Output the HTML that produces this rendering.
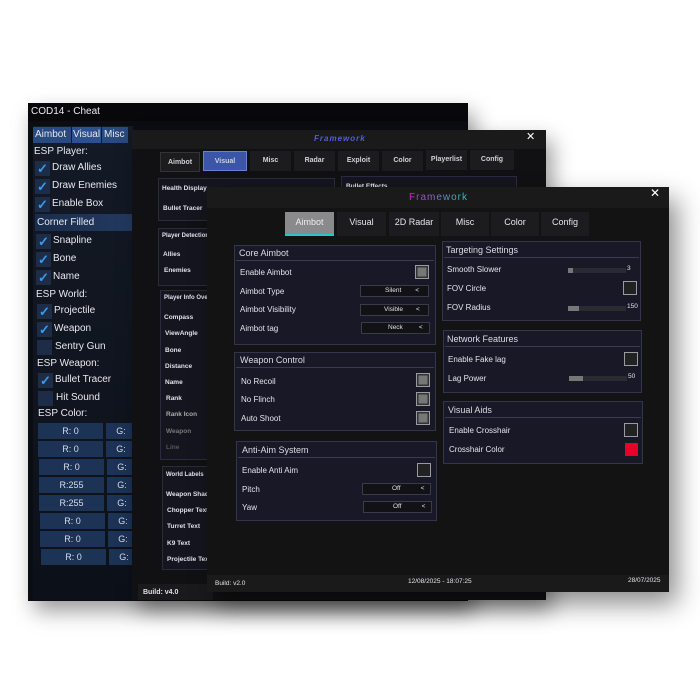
<!DOCTYPE html>
<html><head><style>
*{margin:0;padding:0;box-sizing:border-box}
body{width:700px;height:700px;background:#fff;position:relative;overflow:hidden;font-family:"Liberation Sans",sans-serif;color:#e6e6ee}
.a{position:absolute;white-space:nowrap}
.w1{left:28px;top:103px;width:440px;height:498px;background:#0b0d12;box-shadow:6px 10px 20px rgba(0,0,0,.4)}
.w2{left:132px;top:130px;width:414px;height:470px;background:#111113;box-shadow:6px 10px 20px rgba(0,0,0,.4)}
.w3{left:207px;top:187px;width:462px;height:405px;background:#131313;box-shadow:8px 12px 24px rgba(0,0,0,.45)}
.t1{font-size:10px;color:#e8e8f0}
.cb{width:15px;height:15px;background:#1d2d48}
.ck{color:#3a9af0;font-size:13px;font-weight:bold;line-height:15px;text-align:center}
.cr{height:16px;background:#1c3356;font-size:9px;color:#d8dce8;text-align:center;line-height:16px}
.tab2{height:20px;background:#1c1c1e;font-size:7px;color:#d0d0d8;text-align:center;line-height:20px;font-weight:bold}
.p2{background:#15151f;border:1px solid #2a2a40}
.l2{font-size:6.5px;font-weight:bold;color:#e0e0e8}
.tab3{top:212px;height:24px;background:#1c1c1e;font-size:9px;color:#e4e4ec;text-align:center;line-height:20px}
.p3{background:#181826;border:1px solid #34344c}
.h3{font-size:9px;color:#dcdce6}
.l3{font-size:8px;color:#e4e4ec}
.chk{width:14px;height:14px;border:1.5px solid #9a9aa2;background:#222}
.chk.f{background:#777;box-shadow:inset 0 0 0 1.5px #333}
.dd{width:69px;height:12px;background:#111116;border:1px solid #3a3a48;font-size:6.5px;color:#e0e0e8;line-height:10px}
.sl{width:58px;height:5px;background:#2a2a32}
.sl i{display:block;height:5px;background:#777}
</style></head><body>

<div class="a w1"></div>
<div class="a" style="left:28px;top:103px;width:440px;height:18px;background:#08080a"></div>
<div class="a t1" style="left:31px;top:106px">COD14 - Cheat</div>
<div class="a" style="left:33px;top:126px;width:100px;height:474px;background:linear-gradient(#141a26,#0c1018)"></div>
<div class="a" style="left:33px;top:127px;width:38px;height:16px;background:#284a80;font-size:10px;line-height:16px;padding-left:2px">Aimbot</div>
<div class="a" style="left:72px;top:127px;width:29px;height:16px;background:#2c5090;font-size:10px;line-height:16px;padding-left:1px">Visual</div>
<div class="a" style="left:102px;top:127px;width:26px;height:16px;background:#284a80;font-size:10px;line-height:16px;padding-left:2px">Misc</div>
<div class="a t1" style="left:34px;top:146px">ESP Player:</div>
<div class="a cb ck" style="left:35px;top:161px">✓</div><div class="a t1" style="left:52px;top:162px">Draw Allies</div>
<div class="a cb ck" style="left:35px;top:179px">✓</div><div class="a t1" style="left:52px;top:180px">Draw Enemies</div>
<div class="a cb ck" style="left:35px;top:197px">✓</div><div class="a t1" style="left:52px;top:198px">Enable Box</div>
<div class="a" style="left:35px;top:214px;width:98px;height:17px;background:linear-gradient(90deg,#1a2c4c,#233a60)"></div><div class="a t1" style="left:37px;top:217px">Corner Filled</div>
<div class="a cb ck" style="left:36px;top:234px">✓</div><div class="a t1" style="left:53px;top:235px">Snapline</div>
<div class="a cb ck" style="left:36px;top:252px">✓</div><div class="a t1" style="left:53px;top:253px">Bone</div>
<div class="a cb ck" style="left:36px;top:270px">✓</div><div class="a t1" style="left:53px;top:271px">Name</div>
<div class="a t1" style="left:36px;top:289px">ESP World:</div>
<div class="a cb ck" style="left:37px;top:304px">✓</div><div class="a t1" style="left:54px;top:305px">Projectile</div>
<div class="a cb ck" style="left:37px;top:322px">✓</div><div class="a t1" style="left:54px;top:323px">Weapon</div>
<div class="a cb" style="left:37px;top:340px"></div><div class="a t1" style="left:55px;top:341px">Sentry Gun</div>
<div class="a t1" style="left:37px;top:358px">ESP Weapon:</div>
<div class="a cb ck" style="left:38px;top:373px">✓</div><div class="a t1" style="left:55px;top:374px">Bullet Tracer</div>
<div class="a cb" style="left:38px;top:391px"></div><div class="a t1" style="left:56px;top:392px">Hit Sound</div>
<div class="a t1" style="left:38px;top:408px">ESP Color:</div>
<div class="a cr" style="left:38px;top:423px;width:65px">R: 0</div><div class="a cr" style="left:106px;top:423px;width:30px">G:</div>
<div class="a cr" style="left:38px;top:441px;width:65px">R: 0</div><div class="a cr" style="left:106px;top:441px;width:30px">G:</div>
<div class="a cr" style="left:39px;top:459px;width:65px">R: 0</div><div class="a cr" style="left:107px;top:459px;width:30px">G:</div>
<div class="a cr" style="left:39px;top:477px;width:65px">R:255</div><div class="a cr" style="left:107px;top:477px;width:30px">G:</div>
<div class="a cr" style="left:39px;top:495px;width:65px">R:255</div><div class="a cr" style="left:107px;top:495px;width:30px">G:</div>
<div class="a cr" style="left:40px;top:513px;width:65px">R: 0</div><div class="a cr" style="left:108px;top:513px;width:30px">G:</div>
<div class="a cr" style="left:40px;top:531px;width:65px">R: 0</div><div class="a cr" style="left:108px;top:531px;width:30px">G:</div>
<div class="a cr" style="left:41px;top:549px;width:65px">R: 0</div><div class="a cr" style="left:109px;top:549px;width:30px">G:</div>

<div class="a w2"></div>
<div class="a" style="left:132px;top:130px;width:414px;height:19px;background:#1a1a1a"></div>
<div class="a" style="left:314px;top:134px;font-size:8px;font-style:italic;font-weight:bold;color:#4e5ee0;letter-spacing:1px">Framework</div>
<div class="a" style="left:526px;top:130px;font-size:11px;color:#fff">✕</div>
<div class="a tab2" style="left:160px;top:152px;width:40px;border:1px solid #333">Aimbot</div>
<div class="a tab2" style="left:203px;top:151px;width:44px;background:#3b56a8;border:1px solid #6a80d0">Visual</div>
<div class="a tab2" style="left:250px;top:151px;width:41px">Misc</div>
<div class="a tab2" style="left:294px;top:151px;width:41px">Radar</div>
<div class="a tab2" style="left:338px;top:151px;width:41px">Exploit</div>
<div class="a tab2" style="left:382px;top:151px;width:41px">Color</div>
<div class="a tab2" style="left:426px;top:150px;width:41px">Playerlist</div>
<div class="a tab2" style="left:470px;top:150px;width:44px">Config</div>
<div class="a p2" style="left:158px;top:178px;width:177px;height:43px"></div>
<div class="a l2" style="left:162px;top:185px">Health Display</div>
<div class="a l2" style="left:163px;top:205px">Bullet Tracer</div>
<div class="a p2" style="left:341px;top:176px;width:176px;height:20px"></div>
<div class="a l2" style="left:346px;top:183px">Bullet Effects</div>
<div class="a p2" style="left:158px;top:228px;width:52px;height:58px"></div>
<div class="a l2" style="left:162px;top:233px;font-size:6px">Player Detection</div>
<div class="a l2" style="left:163px;top:251px">Allies</div>
<div class="a l2" style="left:164px;top:267px">Enemies</div>
<div class="a p2" style="left:160px;top:290px;width:50px;height:170px"></div>
<div class="a l2" style="left:164px;top:295px;font-size:6px">Player Info Overl</div>
<div class="a l2" style="left:164px;top:314px">Compass</div>
<div class="a l2" style="left:165px;top:330px">ViewAngle</div>
<div class="a l2" style="left:165px;top:347px">Bone</div>
<div class="a l2" style="left:165px;top:363px">Distance</div>
<div class="a l2" style="left:165px;top:379px">Name</div>
<div class="a l2" style="left:166px;top:395px">Rank</div>
<div class="a l2" style="left:166px;top:411px;color:#aaa">Rank Icon</div>
<div class="a l2" style="left:166px;top:428px;color:#777">Weapon</div>
<div class="a l2" style="left:166px;top:444px;color:#555">Line</div>
<div class="a p2" style="left:162px;top:466px;width:48px;height:104px"></div>
<div class="a l2" style="left:166px;top:472px;font-size:6px">World Labels</div>
<div class="a l2" style="left:166px;top:491px">Weapon Shader</div>
<div class="a l2" style="left:167px;top:507px">Chopper Text</div>
<div class="a l2" style="left:167px;top:523px">Turret Text</div>
<div class="a l2" style="left:167px;top:540px">K9 Text</div>
<div class="a l2" style="left:167px;top:556px">Projectile Text</div>
<div class="a" style="left:138px;top:584px;width:75px;height:16px;background:#1a1a1c"></div>
<div class="a l2" style="left:143px;top:589px;font-size:7px">Build: v4.0</div>

<div class="a w3"></div>
<div class="a" style="left:207px;top:187px;width:462px;height:21px;background:#1a1a1a"></div>
<div class="a" style="left:409px;top:192px;font-size:10px;letter-spacing:1px;background:linear-gradient(90deg,#d020d0,#20d0c0);-webkit-background-clip:text;color:transparent">Framework</div>
<div class="a" style="left:650px;top:186px;font-size:12px;color:#fff">✕</div>
<div class="a tab3" style="left:285px;width:49px;background:#8a8a8c;color:#eee;border-bottom:2px solid #20c8c8">Aimbot</div>
<div class="a tab3" style="left:337px;width:49px">Visual</div>
<div class="a tab3" style="left:389px;width:50px">2D Radar</div>
<div class="a tab3" style="left:441px;width:48px">Misc</div>
<div class="a tab3" style="left:491px;width:48px">Color</div>
<div class="a tab3" style="left:541px;width:48px">Config</div>

<div class="a p3" style="left:234px;top:245px;width:202px;height:100px"></div>
<div class="a" style="left:236px;top:260px;width:198px;height:1px;background:#3a3a50"></div>
<div class="a h3" style="left:239px;top:248px">Core Aimbot</div>
<div class="a l3" style="left:240px;top:268px">Enable Aimbot</div><div class="a chk f" style="left:415px;top:265px"></div>
<div class="a l3" style="left:240px;top:287px">Aimbot Type</div><div class="a dd" style="left:360px;top:285px"><span style="margin-left:24px">Silent</span><span style="margin-left:14px">&lt;</span></div>
<div class="a l3" style="left:240px;top:305px">Aimbot Visibility</div><div class="a dd" style="left:360px;top:304px"><span style="margin-left:23px">Visible</span><span style="margin-left:13px">&lt;</span></div>
<div class="a l3" style="left:240px;top:324px">Aimbot tag</div><div class="a dd" style="left:361px;top:322px"><span style="margin-left:26px">Neck</span><span style="margin-left:16px">&lt;</span></div>

<div class="a p3" style="left:234px;top:352px;width:202px;height:79px"></div>
<div class="a" style="left:236px;top:367px;width:198px;height:1px;background:#3a3a50"></div>
<div class="a h3" style="left:240px;top:355px">Weapon Control</div>
<div class="a l3" style="left:241px;top:377px">No Recoil</div><div class="a chk f" style="left:416px;top:373px"></div>
<div class="a l3" style="left:241px;top:395px">No Flinch</div><div class="a chk f" style="left:416px;top:392px"></div>
<div class="a l3" style="left:241px;top:414px">Auto Shoot</div><div class="a chk f" style="left:416px;top:411px"></div>

<div class="a p3" style="left:236px;top:441px;width:201px;height:80px"></div>
<div class="a" style="left:238px;top:457px;width:197px;height:1px;background:#3a3a50"></div>
<div class="a h3" style="left:242px;top:445px">Anti-Aim System</div>
<div class="a l3" style="left:242px;top:466px">Enable Anti Aim</div><div class="a chk" style="left:417px;top:463px"></div>
<div class="a l3" style="left:242px;top:485px">Pitch</div><div class="a dd" style="left:362px;top:483px"><span style="margin-left:29px">Off</span><span style="margin-left:20px">&lt;</span></div>
<div class="a l3" style="left:242px;top:503px">Yaw</div><div class="a dd" style="left:363px;top:501px"><span style="margin-left:29px">Off</span><span style="margin-left:20px">&lt;</span></div>

<div class="a p3" style="left:442px;top:241px;width:199px;height:80px"></div>
<div class="a" style="left:444px;top:257px;width:195px;height:1px;background:#3a3a50"></div>
<div class="a h3" style="left:446px;top:245px">Targeting Settings</div>
<div class="a l3" style="left:447px;top:265px">Smooth Slower</div><div class="a sl" style="left:568px;top:268px"><i style="width:5px"></i></div><div class="a l3" style="left:627px;top:265px;font-size:6.5px">3</div>
<div class="a l3" style="left:447px;top:284px">FOV Circle</div><div class="a chk" style="left:623px;top:281px"></div>
<div class="a l3" style="left:447px;top:303px">FOV Radius</div><div class="a sl" style="left:568px;top:306px"><i style="width:11px"></i></div><div class="a l3" style="left:627px;top:303px;font-size:6.5px">150</div>

<div class="a p3" style="left:443px;top:330px;width:199px;height:63px"></div>
<div class="a" style="left:445px;top:346px;width:195px;height:1px;background:#3a3a50"></div>
<div class="a h3" style="left:447px;top:334px">Network Features</div>
<div class="a l3" style="left:448px;top:355px">Enable Fake lag</div><div class="a chk" style="left:624px;top:352px"></div>
<div class="a l3" style="left:448px;top:374px">Lag Power</div><div class="a sl" style="left:569px;top:376px"><i style="width:14px"></i></div><div class="a l3" style="left:628px;top:373px;font-size:6.5px">50</div>

<div class="a p3" style="left:443px;top:401px;width:200px;height:63px"></div>
<div class="a" style="left:445px;top:417px;width:196px;height:1px;background:#3a3a50"></div>
<div class="a h3" style="left:448px;top:405px">Visual Aids</div>
<div class="a l3" style="left:449px;top:426px">Enable Crosshair</div><div class="a chk" style="left:624px;top:423px"></div>
<div class="a l3" style="left:449px;top:445px">Crosshair Color</div><div class="a" style="left:625px;top:443px;width:13px;height:13px;background:#e8002a"></div>

<div class="a" style="left:207px;top:575px;width:462px;height:17px;background:#1a1a1a"></div>
<div class="a l3" style="left:215px;top:580px;font-size:6.5px">Build: v2.0</div>
<div class="a l3" style="left:408px;top:578px;font-size:6.5px">12/08/2025 - 18:07:25</div>
<div class="a l3" style="left:628px;top:577px;font-size:6.5px">28/07/2025</div>
</body></html>
